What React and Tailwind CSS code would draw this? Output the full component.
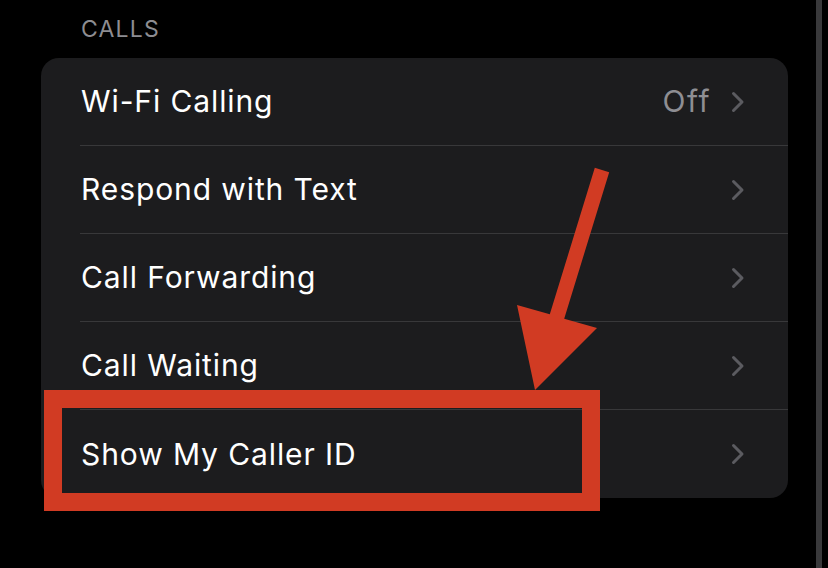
import React from 'react';

const rows = [
  { label: 'Wi-Fi Calling', value: 'Off' },
  { label: 'Respond with Text' },
  { label: 'Call Forwarding' },
  { label: 'Call Waiting' },
  { label: 'Show My Caller ID' },
];

const Chevron = () => (
  <svg width="14" height="22" viewBox="0 0 14 22" className="shrink-0" aria-hidden="true">
    <path d="M2.5 2.5 L11 11 L2.5 19.5" fill="none" stroke="#5b5b60" strokeWidth="3" strokeLinecap="round" strokeLinejoin="round" />
  </svg>
);

const App = () => {
  return (
    <div
      className="relative flex h-[568px] w-[828px] overflow-hidden bg-black"
      style={{ fontFamily: 'Inter, "Noto Sans", sans-serif' }}
    >
      <div className="w-[816px] shrink-0">
        <div className="pl-[81px] pt-[16px] text-[23px] leading-[26px] tracking-[1.2px] text-[#8d8d92]">CALLS</div>

        <div className="ml-[41px] mt-[16px] w-[747px] overflow-hidden rounded-[18px] bg-[#1c1c1e]">
          {rows.map((row, i) => (
            <div
              key={row.label}
              className={
                i < rows.length - 1
                  ? 'ml-[39px] flex h-[88px] items-center border-b border-[#38383a] pl-px pr-[43px]'
                  : 'ml-[39px] flex h-[88px] items-center pl-px pr-[43px]'
              }
            >
              <span className="flex-1 text-[30px] tracking-[0.9px] text-white">{row.label}</span>
              {row.value && <span className="mr-[20px] text-[30px] tracking-[1.5px] text-[#8e8e93]">{row.value}</span>}
              <Chevron />
            </div>
          ))}
        </div>
      </div>

      {/* thin grey rail at the right edge */}
      <div className="h-full w-[6px] shrink-0 bg-[#39393b]" />

      {/* annotation: red highlight box */}
      <div className="absolute left-[44px] top-[390px] h-[121px] w-[556px] border-[18px] border-[#d13b23]" />

      {/* annotation: red arrow */}
      <svg className="absolute left-0 top-0" width="828" height="568" viewBox="0 0 828 568" aria-hidden="true">
        <polygon
          points="594.8,167.8 609.2,172.2 564.2,318.7 597,328 535,390 517,305 549.8,314.3"
          fill="#d13b23"
        />
      </svg>
    </div>
  );
};

export default App;
